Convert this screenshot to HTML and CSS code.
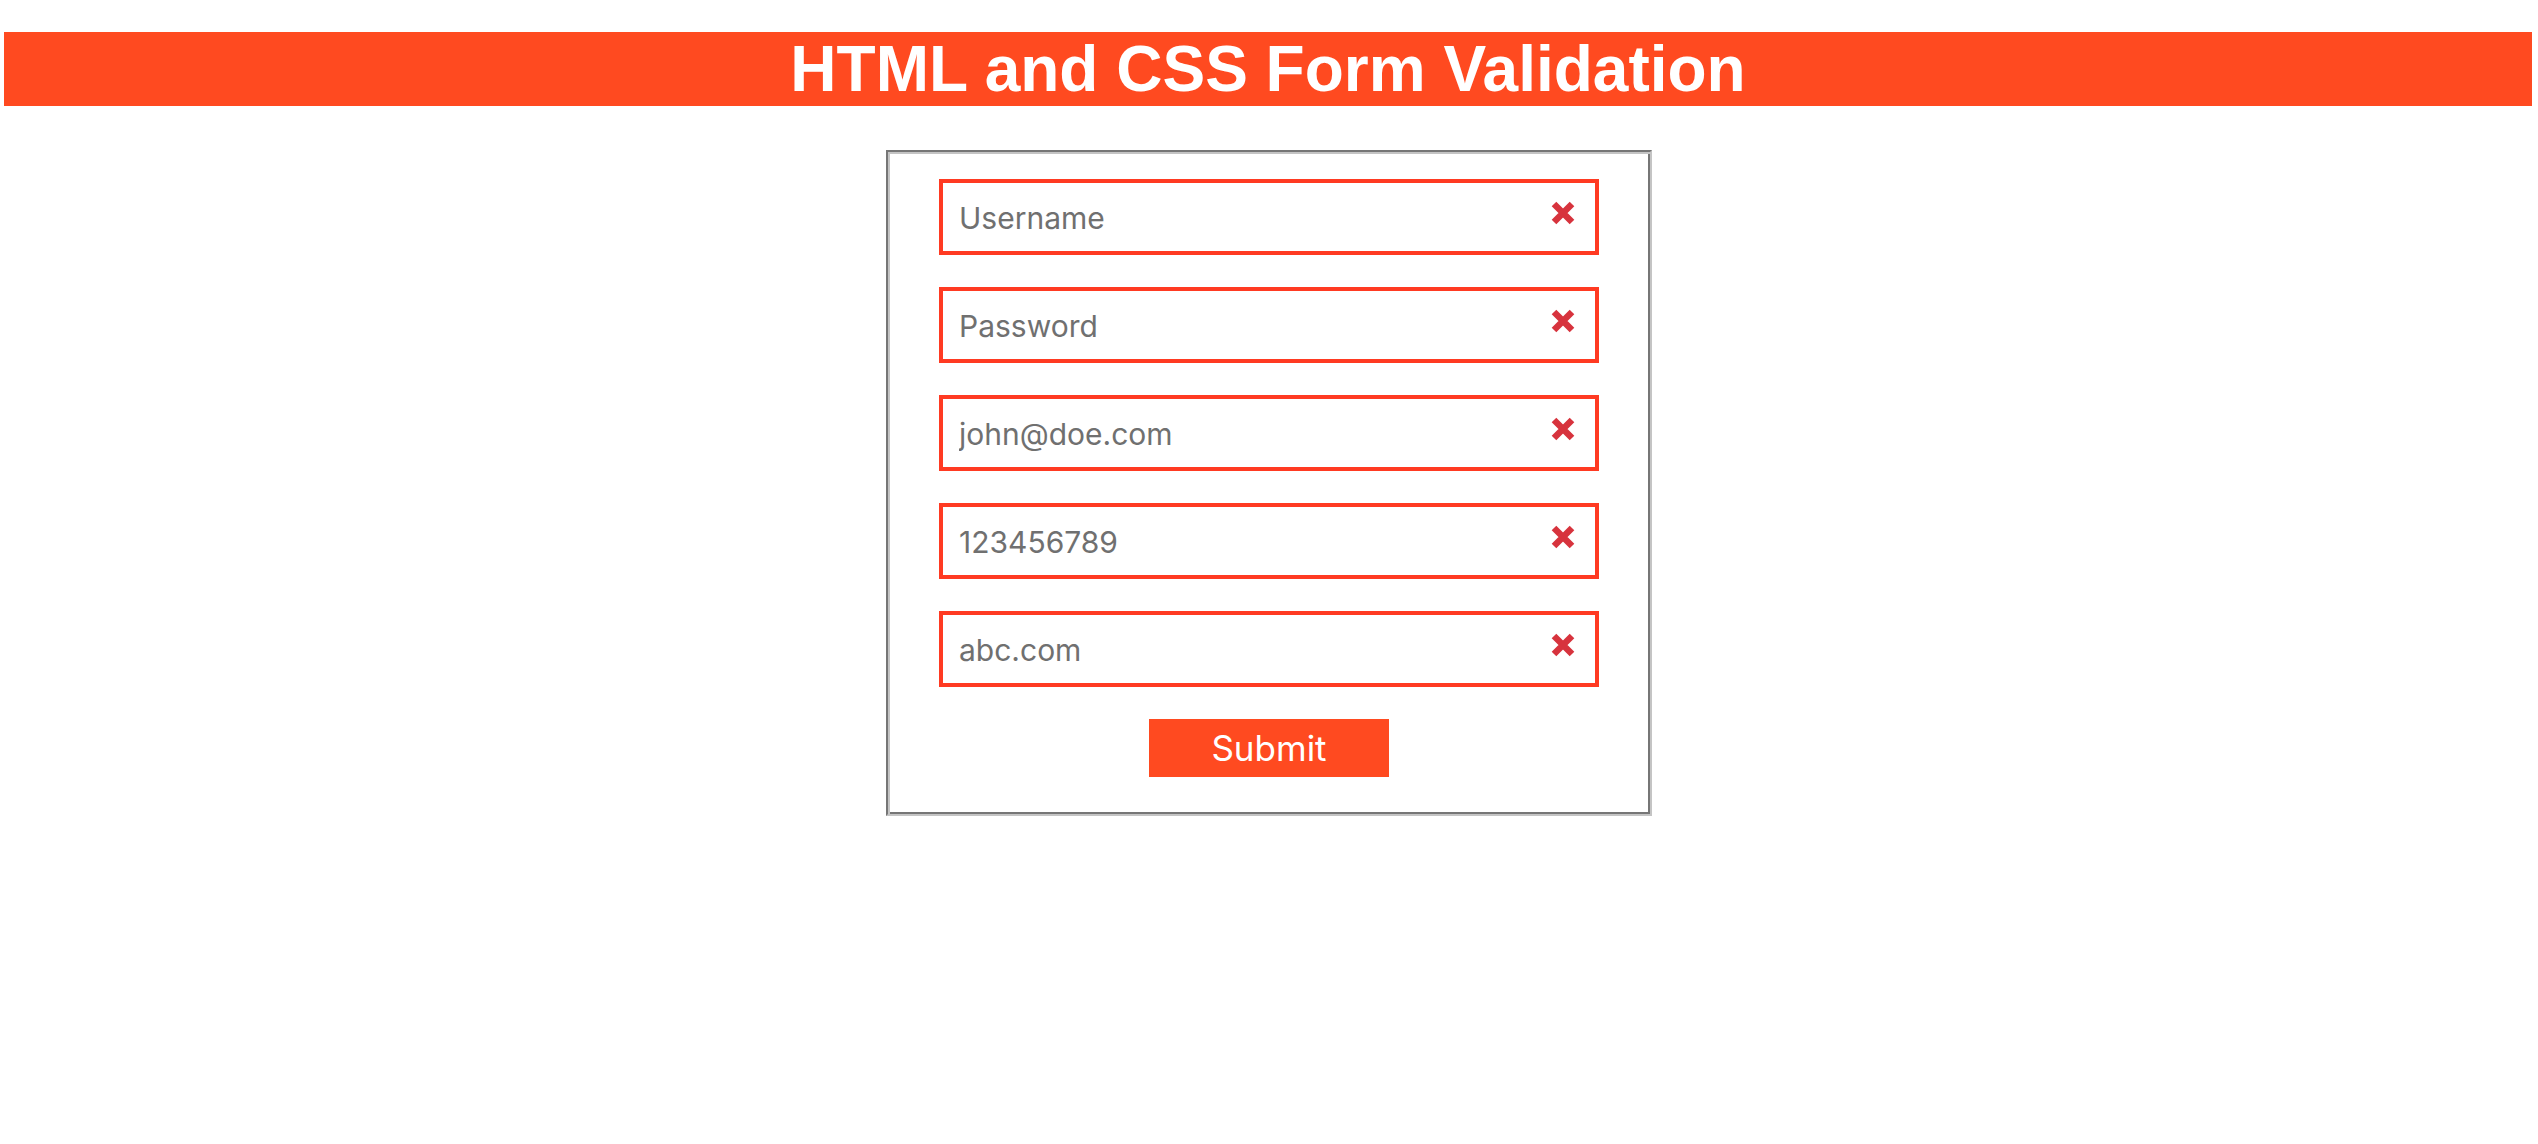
FILE: index.html
```html
<!DOCTYPE html>
<html lang="en">
<head>
<meta charset="utf-8">
<title>HTML and CSS Form Validation</title>
<link rel="stylesheet" href="styles.css">
</head>
<body>
<h1 class="banner">HTML and CSS Form Validation</h1>
<form class="form-box">
  <div class="field"><input class="field-input" type="text" placeholder="Username"><svg class="field-icon" viewBox="0 0 24 24"><path d="M3 3L21 21M21 3L3 21"/></svg></div>
  <div class="field"><input class="field-input" type="password" placeholder="Password"><svg class="field-icon" viewBox="0 0 24 24"><path d="M3 3L21 21M21 3L3 21"/></svg></div>
  <div class="field"><input class="field-input" type="email" placeholder="john@doe.com"><svg class="field-icon" viewBox="0 0 24 24"><path d="M3 3L21 21M21 3L3 21"/></svg></div>
  <div class="field"><input class="field-input" type="tel" placeholder="123456789"><svg class="field-icon" viewBox="0 0 24 24"><path d="M3 3L21 21M21 3L3 21"/></svg></div>
  <div class="field"><input class="field-input" type="url" placeholder="abc.com"><svg class="field-icon" viewBox="0 0 24 24"><path d="M3 3L21 21M21 3L3 21"/></svg></div>
  <button class="submit-btn" type="button">Submit</button>
</form>
</body>
</html>
```
FILE: styles.css
```css
html, body {
  margin: 0;
  padding: 0;
  background: #ffffff;
}

body {
  padding-top: 32px;
}

.banner {
  margin: 0 6px 0 4px;
  height: 74px;
  background: #ff4a20;
  color: #ffffff;
  font-family: "Liberation Sans", Arial, sans-serif;
  font-weight: bold;
  font-size: 64px;
  line-height: 74px;
  text-align: center;
}

.form-box {
  box-sizing: border-box;
  width: 766px;
  margin: 44px auto 0;
  padding: 27px 0 37px;
  border: 2px solid;
  border-color: #767676 #c4c4c4 #c4c4c4 #767676;
  box-shadow: inset 2px 2px 0 #c4c4c4, inset -2px -2px 0 #767676;
  display: flex;
  flex-direction: column;
  align-items: center;
  gap: 32px;
}

.field {
  position: relative;
  box-sizing: border-box;
  width: 660px;
  height: 76px;
  border: 4px solid #ff3a22;
  display: flex;
  align-items: center;
}

.field-input {
  box-sizing: border-box;
  width: 100%;
  height: 100%;
  border: 0;
  outline: none;
  margin: 0;
  padding: 2px 60px 0 16px;
  background: transparent;
  font-family: "Inter", "Noto Sans", sans-serif;
  font-size: 30px;
  color: #707070;
}

.field-input::placeholder {
  color: #707070;
  opacity: 1;
}

.field-icon {
  position: absolute;
  right: 20px;
  top: 18px;
  width: 24px;
  height: 24px;
  fill: none;
  stroke: #d7333d;
  stroke-width: 6.5;
}

.submit-btn {
  width: 240px;
  height: 58px;
  border: 0;
  padding: 0;
  background: #ff4a20;
  color: #ffffff;
  font-family: "Inter", "Noto Sans", sans-serif;
  font-size: 35px;
  cursor: pointer;
}
```
